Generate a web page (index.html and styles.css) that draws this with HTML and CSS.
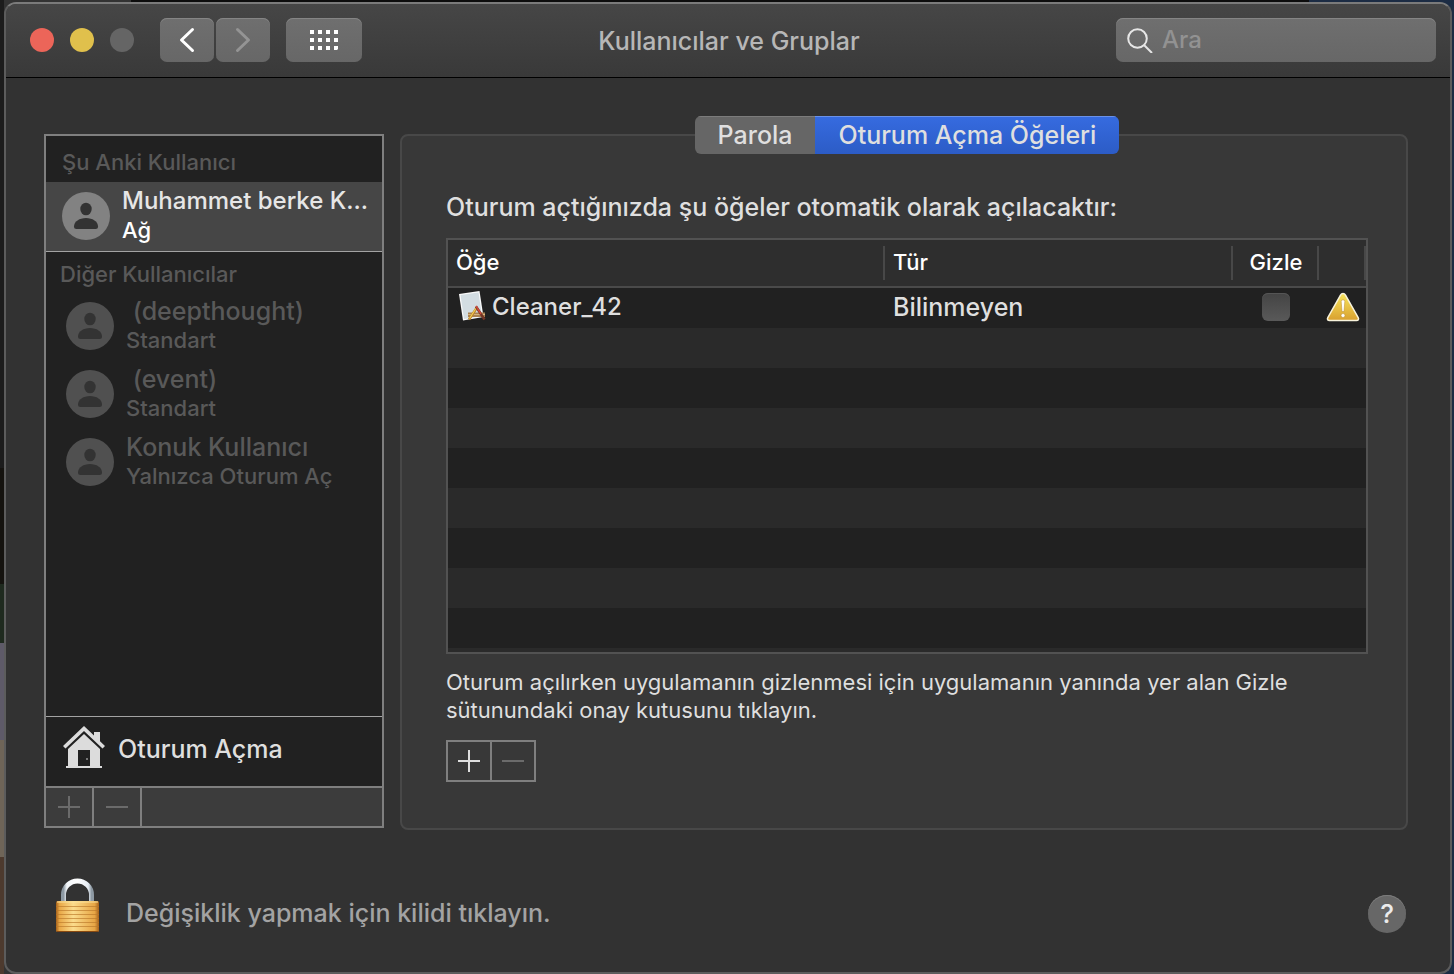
FILE: index.html
```
<!DOCTYPE html>
<html lang="tr">
<head>
<meta charset="utf-8">
<title>Kullanıcılar ve Gruplar</title>
<link rel="stylesheet" href="styles.css">
</head>
<body>
<svg class="defs" width="0" height="0" aria-hidden="true">
  <symbol id="avatar" viewBox="0 0 48 48">
    <circle class="avatar-disc" cx="24" cy="24" r="24"/>
    <ellipse class="avatar-body" cx="24" cy="17" rx="5.7" ry="6.3"/>
    <path class="avatar-body" d="M12 34.5C12 29.500 17.500 26 24 26s12 3.500 12 8.500q0 2.500-2.500 2.500h-19Q12 37 12 34.500z"/>
  </symbol>
</svg>
<div class="window">
  <header class="titlebar">
    <div class="controls">
      <div class="lights">
        <button class="light close" aria-label="Kapat"></button>
        <button class="light minimize" aria-label="Küçült"></button>
        <button class="light zoom" aria-label="Büyüt" disabled></button>
      </div>
      <div class="nav">
        <button class="tool" aria-label="Geri">
          <svg width="54" height="44" viewBox="0 0 54 44"><path d="M32.500 11.500 21.500 22l11 10.500" fill="none" stroke="#fff" stroke-width="3" stroke-linecap="round" stroke-linejoin="round"/></svg>
        </button>
        <button class="tool" aria-label="İleri" disabled>
          <svg width="54" height="44" viewBox="0 0 54 44"><path d="M21.500 11.500 32.500 22l-11 10.500" fill="none" stroke="#949494" stroke-width="3" stroke-linecap="round" stroke-linejoin="round"/></svg>
        </button>
      </div>
      <button class="tool wide" aria-label="Tümünü Göster">
        <svg width="28" height="20" viewBox="0 0 28 20" fill="#fff"><path d="M0 0h4v4H0zM8 0h4v4H8zM16 0h4v4h-4zM24 0h4v4h-4zM0 8h4v4H0zM8 8h4v4H8zM16 8h4v4h-4zM24 8h4v4h-4zM0 16h4v4H0zM8 16h4v4H8zM16 16h4v4h-4zM24 16h4v3l-1 1h-3z"/></svg>
      </button>
    </div>
    <h1 class="title">Kullanıcılar ve Gruplar</h1>
    <label class="search">
      <svg width="26" height="26" viewBox="0 0 26 26" fill="none" stroke="#e6e6e6" stroke-width="2"><circle cx="10.500" cy="11.500" r="9.300"/><path d="m17 18 8 8"/></svg>
      <input type="search" placeholder="Ara" aria-label="Ara">
    </label>
  </header>

  <main class="content">
    <aside class="sidebar">
      <h2 class="group first">Şu Anki Kullanıcı</h2>
      <div class="user current">
        <svg class="avatar" width="48" height="48"><use href="#avatar"/></svg>
        <div class="who"><div class="name">Muhammet berke K...</div><div class="role">Ağ</div></div>
      </div>
      <h2 class="group">Diğer Kullanıcılar</h2>
      <div class="user">
        <svg class="avatar" width="48" height="48"><use href="#avatar"/></svg>
        <div class="who"><div class="name">&nbsp;(deepthought)</div><div class="role">Standart</div></div>
      </div>
      <div class="user">
        <svg class="avatar" width="48" height="48"><use href="#avatar"/></svg>
        <div class="who"><div class="name">&nbsp;(event)</div><div class="role">Standart</div></div>
      </div>
      <div class="user">
        <svg class="avatar" width="48" height="48"><use href="#avatar"/></svg>
        <div class="who"><div class="name">Konuk Kullanıcı</div><div class="role">Yalnızca Oturum Aç</div></div>
      </div>
      <div class="login">
        <svg width="42" height="46" viewBox="0 0 42 46">
          <path fill="#dcdcdc" d="M31 6h6v11l-6-6zM21 0l21 20-2.500 2.500L21 5 2.500 22.500 0 20z"/>
          <path fill="#dcdcdc" d="M21 8 5 23v17H3v2h36v-2h-2V23z"/>
          <path fill="#212121" d="M15 24h12v16H15z"/>
          <path fill="#777" d="M23 32h2v2h-2z"/>
        </svg>
        <span>Oturum Açma</span>
      </div>
      <div class="bar">
        <button aria-label="Kullanıcı ekle" disabled><svg width="22" height="22" viewBox="0 0 22 22"><path d="M0 11h22M11 0v22"/></svg></button>
        <button aria-label="Kullanıcı sil" disabled><svg width="22" height="22" viewBox="0 0 22 22"><path d="M0 11h22"/></svg></button>
      </div>
    </aside>

    <section class="panel">
      <div class="tabs" role="tablist">
        <button class="tab" role="tab" aria-selected="false">Parola</button>
        <button class="tab selected" role="tab" aria-selected="true">Oturum Açma Öğeleri</button>
      </div>
      <p class="intro">Oturum açtığınızda şu öğeler otomatik olarak açılacaktır:</p>
      <div class="list">
        <table>
          <colgroup><col><col class="kind"><col class="hide"><col class="status"></colgroup>
          <thead><tr><th>Öğe</th><th>Tür</th><th class="center">Gizle</th><th aria-label="Durum"></th></tr></thead>
          <tbody>
            <tr>
              <td><div class="item">
                <svg width="30" height="34" viewBox="0 0 30 34">
                  <path d="M1 4 21.500 1l4 26L5 30.500z" fill="#fafafa"/>
                  <path d="M2.500 5 20.500 2.500l3.500 23.500L6 29z" fill="#d3dde2"/>
                  <path d="M10 22.500h17v4.500H10z" fill="#a9814f"/>
                  <path d="M10 24.500h17" stroke="#d6b37e"/>
                  <path d="m11 29.500 8-12" stroke="#bd8128" stroke-width="2.500"/>
                  <path d="m11.500 28.500 7-11" stroke="#f0cf58" stroke-width="1.200"/>
                  <path d="m18 16.500 8.500 13" stroke="#733526" stroke-width="2.500"/>
                  <path d="m18 16 5 8" stroke="#cf4a3b" stroke-width="1.500"/>
                </svg>
                <span>Cleaner_42</span></div></td>
              <td>Bilinmeyen</td>
              <td class="center"><input class="check" type="checkbox" aria-label="Cleaner_42 öğesini gizle"></td>
              <td class="center"><svg class="warn" width="34" height="30" viewBox="0 0 34 30">
                <defs>
                  <linearGradient id="amber" x1="0" y1="0" x2="0" y2="1"><stop offset="0" stop-color="#f7e45c"/><stop offset="1" stop-color="#d9a02f"/></linearGradient>
                </defs>
                <path d="M17 1.500c1.200 0 1.900.6 2.500 1.700l12.700 22.500c.9 1.700 0 2.800-1.700 2.800h-27c-1.700 0-2.600-1.100-1.700-2.800L14.500 3.200c.6-1.100 1.300-1.700 2.500-1.700z" fill="url(#amber)" stroke="#f8f3dc" stroke-width="1.500"/>
                <path d="M15.200 9.500q0-1.700 1.800-1.700t1.800 1.700L18 19.500h-2z" fill="#fff" stroke="#b98a2c" stroke-width=".5"/>
                <circle cx="17" cy="23.500" r="2" fill="#fff" stroke="#b98a2c" stroke-width=".5"/>
              </svg></td>
            </tr>
          </tbody>
        </table>
      </div>
      <p class="hint">Oturum açılırken uygulamanın gizlenmesi için uygulamanın yanında yer alan Gizle sütunundaki onay kutusunu tıklayın.</p>
      <div class="pair">
        <button aria-label="Öğe ekle"><svg width="22" height="22" viewBox="0 0 22 22"><path d="M0 11h22M11 0v22"/></svg></button>
        <button aria-label="Öğe sil" disabled><svg width="22" height="22" viewBox="0 0 22 22"><path d="M0 11h22"/></svg></button>
      </div>
    </section>
  </main>

  <footer class="footer">
    <button class="lock" aria-label="Kilit">
      <svg width="44" height="54" viewBox="0 0 44 54">
        <defs>
          <linearGradient id="steel" x1="0" x2="1" y1="0" y2="0"><stop offset="0" stop-color="#8d99a3"/><stop offset=".12" stop-color="#f2f6fa"/><stop offset=".5" stop-color="#fff"/><stop offset=".88" stop-color="#e6edf4"/><stop offset="1" stop-color="#8d99a3"/></linearGradient>
          <linearGradient id="brass" x1="0" x2="1" y1="0" y2="0"><stop offset="0" stop-color="#a4601a"/><stop offset=".08" stop-color="#e9a847"/><stop offset=".4" stop-color="#fbdc8c"/><stop offset=".9" stop-color="#e7a544"/><stop offset="1" stop-color="#a4601a"/></linearGradient>
        </defs>
        <path d="M7.500 24V17a14 14 0 0 1 28 0V24" fill="none" stroke="url(#steel)" stroke-width="5"/>
        <rect x="0" y="23" width="43" height="31" rx="1.500" fill="url(#brass)"/>
        <path d="M1 24h41" stroke="#fbe49c"/>
        <path d="M0 28.500h43M0 32.500h43M0 36.500h43M0 40.500h43M0 44.500h43M0 48.500h43" stroke="#ba7829" stroke-opacity=".65"/>
        <path d="M1 53.500h41" stroke="#8a4a10"/>
      </svg>
    </button>
    <span class="locktext">Değişiklik yapmak için kilidi tıklayın.</span>
    <button class="help" aria-label="Yardım">?</button>
  </footer>
</div>
</body>
</html>
```
FILE: styles.css
```
* { box-sizing: border-box; }

body {
  margin: 0;
  min-height: 100vh;
  display: flex;
  padding: 2px 2px 0 4px;
  background:
    linear-gradient(#1c1c1c 0 48%, #15130f 48% 60%, #1f2a1f 60% 66%, #5e5a68 66% 76%, #6f6558 76% 88%, #4d3a2e 88%) left / 4px 100% no-repeat,
    linear-gradient(90deg, #333 0 9%, #0d0d0d 9% 90%, #1c2c44 90%);
  color: #dfdfdf;
  font-family: Inter, Roboto, sans-serif;
  font-size: 25px;
  font-weight: 450;
  line-height: 30px;
}

h1, h2, p { margin: 0; font-weight: inherit; }

button, input { font: inherit; color: inherit; }

button { padding: 0; border: 0; background: none; }

svg { display: block; flex: none; }

.defs { position: absolute; }

.window {
  flex: 1;
  display: flex;
  flex-direction: column;
  border: 2px solid #5c5c5c;
  border-top-color: #7b7b7b;
  border-radius: 12px;
  background: #323232;
  overflow: hidden;
}

/* Title bar */
.titlebar {
  display: grid;
  grid-template-columns: 1fr auto 1fr;
  align-items: center;
  height: 74px;
  padding: 0 14px 2px 24px;
  border-bottom: 1px solid #000;
  background: linear-gradient(#464646, #393939);
}

.controls { display: flex; align-items: center; }

.lights { display: flex; gap: 16px; margin-right: 26px; }

.light { width: 24px; height: 24px; border-radius: 50%; }
.close { background: #ec6559; }
.minimize { background: #e0c04c; }
.zoom { background: #656565; }

.nav { display: flex; gap: 2px; margin-right: 16px; }

.tool {
  display: grid;
  place-items: center;
  width: 54px;
  height: 44px;
  border-radius: 7px;
  background: linear-gradient(#6f6f6f, #676767);
  box-shadow: inset 0 1px #858585;
}

.wide { width: 76px; }

.title { padding: 2px 8px 0 0; color: #b7b7b7; font-size: 25px; }

.search {
  display: flex;
  align-items: center;
  gap: 9px;
  justify-self: end;
  width: 320px;
  height: 44px;
  padding: 0 11px;
  border-radius: 7px;
  background: linear-gradient(#6f6f6f, #676767);
  box-shadow: inset 0 1px #858585;
}

.search input {
  flex: 1;
  min-width: 0;
  padding: 0;
  border: 0;
  outline: 0;
  background: none;
  appearance: none;
  font-size: 24px;
}

.search input::placeholder { color: #929292; opacity: 1; }

/* Body columns */
.content {
  flex: 1;
  display: grid;
  grid-template-columns: 340px 1fr;
  gap: 16px;
  padding: 56px 42px 0 38px;
}

.sidebar {
  display: flex;
  flex-direction: column;
  margin-bottom: 2px;
  border: 2px solid #7f7f7f;
  background: #212121;
}

.group {
  height: 40px;
  padding: 7px 14px 0;
  color: #595959;
  font-size: 22px;
}

.first { height: 46px; padding: 11px 16px 0; }

.user {
  display: flex;
  align-items: center;
  gap: 12px;
  height: 68px;
  padding: 0 2px 0 20px;
  color: #595959;
}

.who { min-width: 0; padding-bottom: 2px; }

.name { white-space: nowrap; }

.role { font-size: 22px; line-height: 28px; }

.avatar-disc { fill: currentColor; }
.avatar { color: #505050; }
.avatar-body { fill: #333; }

.current {
  height: 70px;
  padding-bottom: 2px;
  padding-left: 16px;
  border-bottom: 1px solid #a3a3a3;
  background: #464646;
  color: #e6e6e6;
}

.current .avatar { color: #828282; }
.current .role { color: #fff; }
.current .name { font-size: 24px; }

.login {
  display: flex;
  align-items: center;
  gap: 13px;
  height: 70px;
  margin-top: auto;
  padding: 0 17px 6px;
  border-top: 1px solid #a3a3a3;
}

.bar {
  display: flex;
  height: 40px;
  border-top: 2px solid #7f7f7f;
  background: #3c3c3c;
}

.bar button, .pair button {
  display: grid;
  place-items: center;
  width: 48px;
  border-right: 2px solid #7f7f7f;
}

.bar path, .pair path { stroke: #dfdfdf; stroke-width: 2; }
.bar button:disabled path, .pair button:disabled path { stroke: #6b6b6b; }

/* Login items */
.panel {
  display: flex;
  flex-direction: column;
  align-items: flex-start;
  padding: 0 38px 46px 44px;
  border: 2px solid #484848;
  border-radius: 8px;
  background: #383838;
}

.tabs {
  display: flex;
  align-self: center;
  height: 38px;
  margin-top: -20px;
  border-radius: 6px;
  overflow: hidden;
}

.tab {
  padding: 0 23px;
  background: #666;
  box-shadow: inset 0 1px #7c7c7c;
}

.selected {
  background: linear-gradient(#366be0, #2c5cc6);
  box-shadow: inset 0 1px #6a91e8;
}

.intro { margin: 38px 0 16px; }

.list {
  flex: 1;
  align-self: stretch;
  min-height: 416px;
  border: 2px solid #525252;
  background: repeating-linear-gradient(#212121 0 40px, #2a2a2a 40px 80px) 0 48px;
}

table {
  width: 100%;
  table-layout: fixed;
  border-spacing: 0;
}

.kind { width: 348px; }
.hide { width: 86px; }
.status { width: 47px; }

th {
  height: 48px;
  padding: 0 8px 2px;
  border-bottom: 2px solid #4a4a4a;
  background: linear-gradient(#484848, #484848) right 6px / 2px 34px no-repeat #2e2e2e;
  color: #fff;
  font-size: 22px;
  font-weight: 500;
  text-align: left;
}

td { height: 40px; padding: 0 8px 2px; }

th.center, td.center { padding-right: 0; padding-left: 0; text-align: center; }

.item { display: flex; align-items: center; gap: 4px; padding-left: 2px; font-size: 24px; }

.check {
  display: block;
  width: 28px;
  height: 28px;
  margin: 0 auto;
  appearance: none;
  border-radius: 6px;
  background: linear-gradient(#444, #595959);
  box-shadow: inset 0 1px #555;
}

.warn { margin: 0 auto; }

.hint { margin: 14px 0 16px; font-size: 22px; font-weight: 400; line-height: 28px; }

.pair {
  display: flex;
  height: 42px;
  border: 2px solid #7f7f7f;
}

.pair button { width: 44px; }
.pair button:last-child { width: 42px; border-right: 0; }

/* Footer */
.footer {
  display: flex;
  align-items: center;
  height: 142px;
  padding: 26px 44px 0 50px;
}

.lock { padding-bottom: 18px; }

.locktext { margin-left: 26px; padding-bottom: 2px; color: #a3a3a3; }

.help {
  width: 38px;
  height: 38px;
  margin-left: auto;
  border-radius: 50%;
  background: #676767;
  box-shadow: inset 0 1px #7c7c7c;
  color: #ececec;
  font-size: 26px;
}
```
